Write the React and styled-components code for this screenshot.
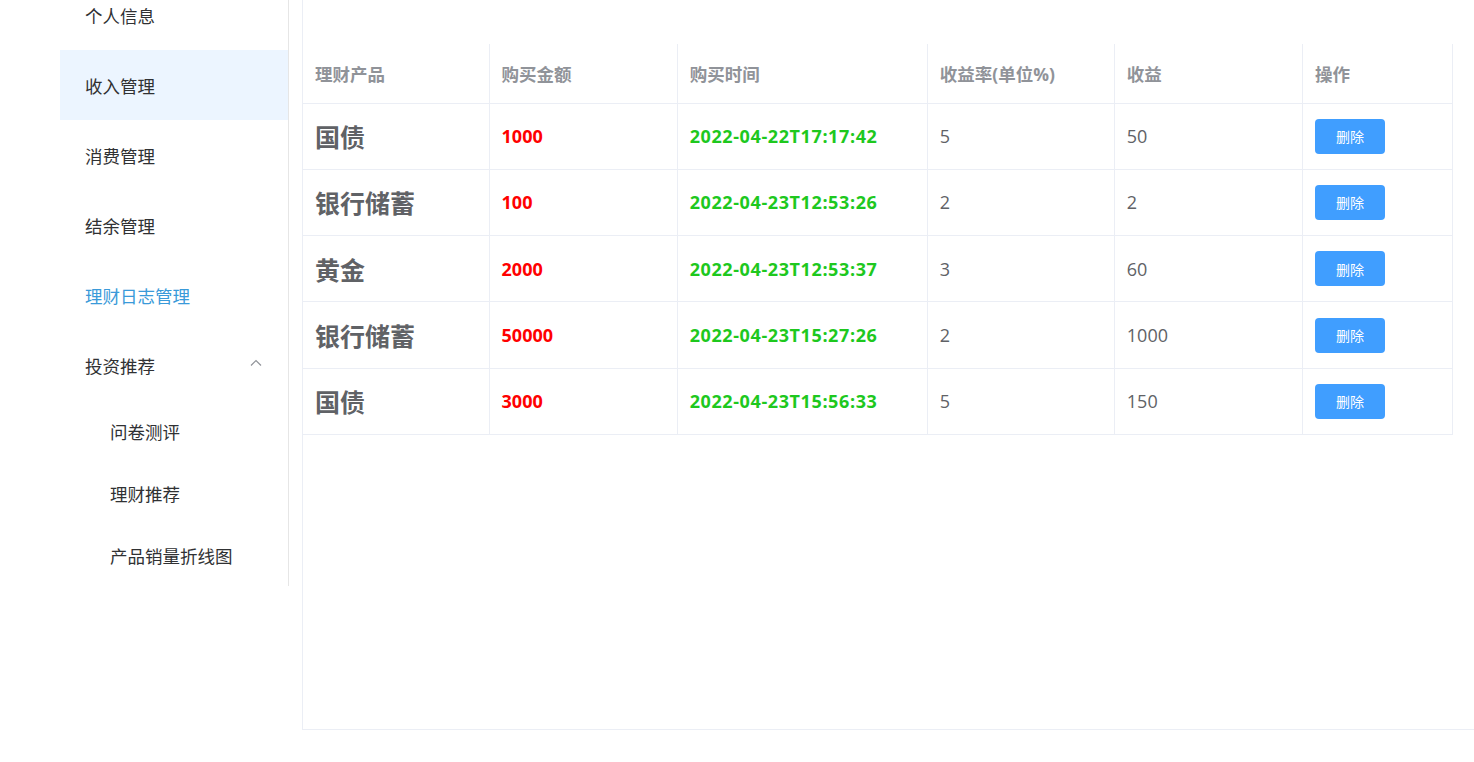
import React from 'react';
import styled, { createGlobalStyle } from 'styled-components';

const GlobalStyle = createGlobalStyle`
  html, body {
    margin: 0;
    padding: 0;
    background: #fff;
    overflow: hidden;
    font-family: "Open Sans", "Noto Sans CJK SC", sans-serif;
  }
`;

const Page = styled.div`
  display: flex;
  align-items: flex-start;
  gap: 13px;
  padding-left: 60px;
  margin-top: -20px;
`;

/* sidebar menu.. */
const Menu = styled.ul`
  list-style: none;
  margin: 0;
  padding: 0;
  width: 228px;
  border-right: 1px solid #e6e6e6;
`;

const MenuItem = styled.li`
  height: ${(p) => (p.sub ? '62px' : '70px')};
  display: flex;
  align-items: center;
  justify-content: space-between;
  padding: 0 25px 0 ${(p) => (p.sub ? '50px' : '25px')};
  font-size: 17.5px;
  color: ${(p) => (p.active ? '#3a9ad9' : '#303133')};
  background: ${(p) => (p.hover ? '#ecf5ff' : 'transparent')};
  cursor: pointer;
`;

const Chevron = styled.svg`
  width: 14px;
  height: 14px;
  margin-bottom: 4px;
`;

/* main content box */
const Content = styled.main`
  flex: 1;
  height: 730px;
  margin-top: 20px;
  margin-right: -40px;
  box-sizing: border-box;
  padding-top: 44px;
  border-left: 1px solid #ebeef5;
  border-bottom: 1px solid #ebeef5;
`;

const Table = styled.table`
  width: 1150px;
  border-collapse: collapse;
  table-layout: fixed;
  border-right: 1px solid #ebeef5;
`;

const Th = styled.th`
  height: 59px;
  padding: 0 12px;
  text-align: left;
  font-size: 17.5px;
  font-weight: 700;
  color: #909399;
  border-right: 1px solid #ebeef5;
  border-bottom: 1px solid #ebeef5;
  box-sizing: border-box;
`;

const Td = styled.td`
  height: 66.3px;
  padding: 0 12px;
  font-size: 18px;
  color: #606266;
  border-right: 1px solid #ebeef5;
  border-bottom: 1px solid #ebeef5;
  box-sizing: border-box;
`;

const Product = styled.span`
  font-size: 25px;
  font-weight: 700;
  color: #606266;
`;

const Amount = styled.span`
  font-weight: 700;
  color: #ff0000;
`;

const Time = styled.span`
  font-weight: 700;
  color: #1ec81e;
  letter-spacing: 0.6px;
`;

const DeleteButton = styled.button`
  width: 70px;
  height: 35px;
  border: none;
  border-radius: 4px;
  background: #409eff;
  color: #fff;
  font-size: 14px;
  font-family: "Noto Sans CJK SC", sans-serif;
  cursor: pointer;
`;

const columns = [
  { title: '理财产品', width: 186 },
  { title: '购买金额', width: 188 },
  { title: '购买时间', width: 250 },
  { title: '收益率(单位%)', width: 187 },
  { title: '收益', width: 188 },
  { title: '操作', width: 150 },
];

const rows = [
  { name: '国债', amount: 1000, time: '2022-04-22T17:17:42', rate: 5, profit: 50 },
  { name: '银行储蓄', amount: 100, time: '2022-04-23T12:53:26', rate: 2, profit: 2 },
  { name: '黄金', amount: 2000, time: '2022-04-23T12:53:37', rate: 3, profit: 60 },
  { name: '银行储蓄', amount: 50000, time: '2022-04-23T15:27:26', rate: 2, profit: 1000 },
  { name: '国债', amount: 3000, time: '2022-04-23T15:56:33', rate: 5, profit: 150 },
];

const App = () => {
  return (
    <>
      <GlobalStyle />
      <Page>
        <Menu>
          <MenuItem>个人信息</MenuItem>
          <MenuItem hover>收入管理</MenuItem>
          <MenuItem>消费管理</MenuItem>
          <MenuItem>结余管理</MenuItem>
          <MenuItem active>理财日志管理</MenuItem>
          <MenuItem>
            投资推荐
            <Chevron viewBox='0 0 14 14' fill='none' stroke='#909399' strokeWidth='1.2'>
              <path d='M2 9.5 L7 4.5 L12 9.5' />
            </Chevron>
          </MenuItem>
          <MenuItem sub>问卷测评</MenuItem>
          <MenuItem sub>理财推荐</MenuItem>
          <MenuItem sub>产品销量折线图</MenuItem>
        </Menu>

        <Content>
          <Table>
            <colgroup>
              {columns.map((c) => (
                <col key={c.title} style={{ width: c.width }} />
              ))}
            </colgroup>
            <thead>
              <tr>
                {columns.map((c) => (
                  <Th key={c.title}>{c.title}</Th>
                ))}
              </tr>
            </thead>
            <tbody>
              {rows.map((r, i) => (
                <tr key={i}>
                  <Td>
                    <Product>{r.name}</Product>
                  </Td>
                  <Td>
                    <Amount>{r.amount}</Amount>
                  </Td>
                  <Td>
                    <Time>{r.time}</Time>
                  </Td>
                  <Td>{r.rate}</Td>
                  <Td>{r.profit}</Td>
                  <Td>
                    <DeleteButton>删除</DeleteButton>
                  </Td>
                </tr>
              ))}
            </tbody>
          </Table>
        </Content>
      </Page>
    </>
  );
};

export default App;
